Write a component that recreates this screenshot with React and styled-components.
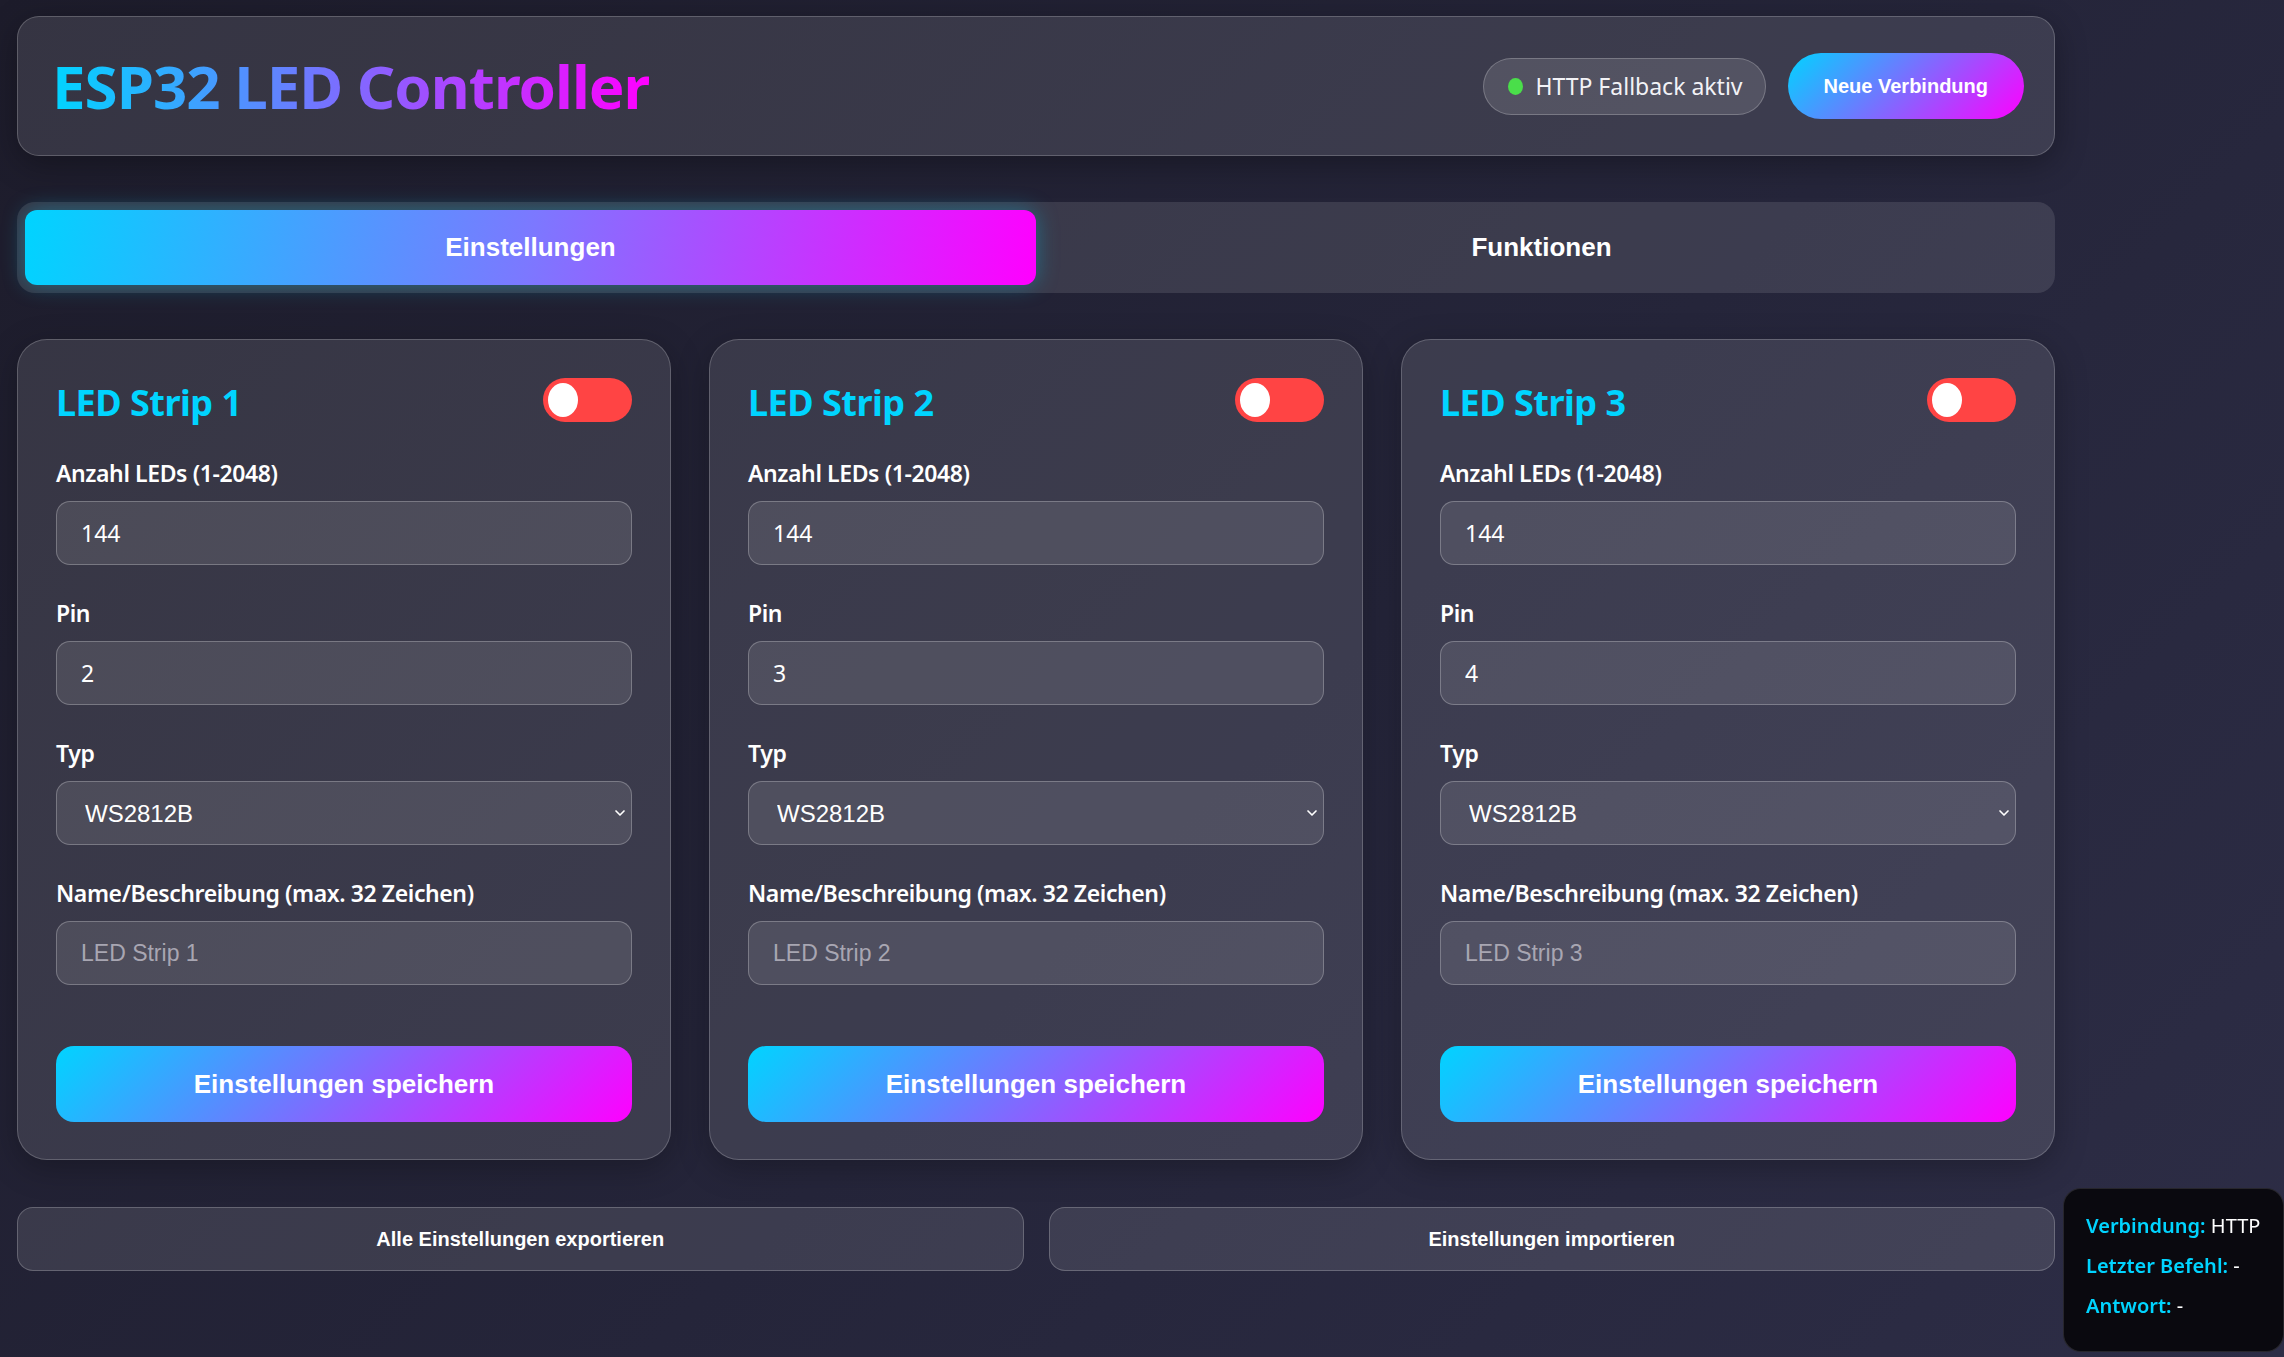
import { useState } from 'react'
import styled, { createGlobalStyle } from 'styled-components'
import { ChevronDown } from 'lucide-react'

const GlobalStyle = createGlobalStyle`
  * { box-sizing: border-box; }
  html, body {
    margin: 0;
    padding: 0;
    min-height: 100%;
  }
  body {
    min-height: 1357px;
    background: linear-gradient(135deg, #1d1c2b 0%, #25253a 55%, #2d2d46 100%);
    color: #fff;
    font-family: 'Noto Sans', 'Open Sans', sans-serif;
  }
`

const gradient = 'linear-gradient(135deg, #00d4ff 0%, #ff00ff 100%)'

const Page = styled.main`
  width: 2072px;
  padding: 16px 17px 40px 17px;
`

const Header = styled.header`
  display: flex;
  align-items: center;
  justify-content: space-between;
  height: 140px;
  padding: 0 30px 0 32px;
  background: rgba(255, 255, 255, 0.11);
  border: 1px solid rgba(255, 255, 255, 0.2);
  border-radius: 22px;
  box-shadow: 0 8px 32px rgba(0, 0, 0, 0.3);
`

const Title = styled.h1`
  margin: 0 0 0 2px;
  font-family: 'Noto Sans', sans-serif;
  font-size: 60px;
  font-weight: 700;
  letter-spacing: -1px;
  background: linear-gradient(90deg, #00d4ff 0%, #ff00ff 100%);
  -webkit-background-clip: text;
  background-clip: text;
  color: transparent;
`

const HeaderRight = styled.div`
  display: flex;
  align-items: center;
  gap: 22px;
`

const StatusPill = styled.div`
  display: flex;
  align-items: center;
  gap: 12px;
  height: 57px;
  padding: 0 22px 0 24px;
  background: rgba(255, 255, 255, 0.12);
  border: 1px solid rgba(255, 255, 255, 0.22);
  border-radius: 30px;
  font-size: 23px;
  color: #f2f2f6;
`

const Dot = styled.span`
  width: 15px;
  height: 17px;
  border-radius: 50%;
  background: ${(p) => p.color};
`

const GradientButton = styled.button`
  border: none;
  cursor: pointer;
  color: #fff;
  font-family: 'Liberation Sans', Arial, sans-serif;
  font-weight: 700;
  background: ${gradient};
  height: ${(p) => p.h}px;
  width: ${(p) => (p.block ? '100%' : 'auto')};
  padding: 0 ${(p) => (p.block ? 0 : 36)}px;
  border-radius: ${(p) => p.radius}px;
  font-size: ${(p) => p.size}px;
  margin-top: ${(p) => p.mt || 0}px;
`

const Tabs = styled.nav`
  display: grid;
  grid-template-columns: 1fr 1fr;
  margin-top: 46px;
  padding: 8px;
  background: rgba(255, 255, 255, 0.11);
  border-radius: 18px;
`

const Tab = styled.button`
  height: 75px;
  border: none;
  border-radius: 12px;
  cursor: pointer;
  font-family: 'Liberation Sans', Arial, sans-serif;
  font-size: 26px;
  font-weight: 700;
  color: #fff;
  background: ${(p) => (p.active ? 'linear-gradient(100deg, #00d4ff 0%, #7c78ff 50%, #ff00ff 100%)' : 'transparent')};
  box-shadow: ${(p) => (p.active ? '0 0 22px rgba(0, 212, 255, 0.35)' : 'none')};
`

const Cards = styled.section`
  display: grid;
  grid-template-columns: repeat(3, 1fr);
  gap: 38px;
  margin-top: 46px;
`

const Card = styled.article`
  padding: 38px 38px 37px;
  background: rgba(255, 255, 255, 0.11);
  border: 1px solid rgba(255, 255, 255, 0.2);
  border-radius: 30px;
  box-shadow: 0 8px 32px rgba(0, 0, 0, 0.25);
`

const CardHead = styled.div`
  display: flex;
  align-items: center;
  justify-content: space-between;
  height: 44px;
  margin-bottom: 35px;
`

const CardTitle = styled.h2`
  margin: 4px 0 0;
  font-size: 36px;
  font-weight: 700;
  letter-spacing: -0.5px;
  color: #00d4ff;
`

const Toggle = styled.button`
  position: relative;
  width: 89px;
  height: 44px;
  padding: 0;
  border: none;
  border-radius: 22px;
  cursor: pointer;
  background: ${(p) => (p.on ? '#44dd55' : '#ff4444')};

  &::after {
    content: '';
    position: absolute;
    top: 5px;
    left: ${(p) => (p.on ? '54px' : '5px')};
    width: 30px;
    height: 34px;
    border-radius: 50%;
    background: #fff;
  }
`

const Group = styled.div`
  margin-bottom: 32px;
`

const Label = styled.label`
  display: block;
  height: 32px;
  line-height: 32px;
  margin-bottom: 12px;
  font-size: 23px;
  font-weight: 600;
  letter-spacing: -0.4px;
  color: #fff;
`

const Field = styled.input`
  display: block;
  width: 100%;
  height: 64px;
  padding: 0 24px;
  background: rgba(255, 255, 255, 0.1);
  border: 1px solid rgba(255, 255, 255, 0.25);
  border-radius: 14px;
  color: #fff;
  font-family: ${(p) => (p.type === 'number' ? "'Noto Sans', sans-serif" : "'Liberation Sans', Arial, sans-serif")};
  font-size: 23px;
  outline: none;

  &::placeholder {
    color: #a8a6b2;
  }
  &::-webkit-inner-spin-button,
  &::-webkit-outer-spin-button {
    -webkit-appearance: none;
    margin: 0;
  }
`

const SelectWrap = styled.div`
  position: relative;

  svg {
    position: absolute;
    right: 4px;
    top: 50%;
    transform: translateY(-50%);
    pointer-events: none;
    color: #fff;
  }
`

const Select = styled.select`
  display: block;
  width: 100%;
  height: 64px;
  padding: 0 28px;
  appearance: none;
  background: rgba(255, 255, 255, 0.1);
  border: 1px solid rgba(255, 255, 255, 0.25);
  border-radius: 14px;
  color: #fff;
  font-family: 'Liberation Sans', Arial, sans-serif;
  font-size: 24px;
  outline: none;

  option {
    background: #2b2a3a;
  }
`

const Footer = styled.div`
  display: grid;
  grid-template-columns: 1fr 1fr;
  gap: 25px;
  margin-top: 47px;
`

const GhostButton = styled.button`
  height: 64px;
  background: rgba(255, 255, 255, 0.11);
  border: 1px solid rgba(255, 255, 255, 0.22);
  border-radius: 16px;
  cursor: pointer;
  color: #fff;
  font-family: 'Liberation Sans', Arial, sans-serif;
  font-size: 20px;
  font-weight: 700;
`

const DebugPanel = styled.aside`
  position: fixed;
  right: 0;
  bottom: 5px;
  width: 221px;
  padding: 17px 0 25px 22px;
  background: #0a090f;
  border: 1px solid rgba(255, 255, 255, 0.12);
  border-radius: 18px;
  font-size: 20px;
  line-height: 40px;
  color: #fff;
  z-index: 10;
`

const Key = styled.span`
  color: #00d4ff;
  font-weight: 600;
`

const strips = [
  { id: 1, leds: 144, pin: 2 },
  { id: 2, leds: 144, pin: 3 },
  { id: 3, leds: 144, pin: 4 },
]

const StripCard = ({ strip }) => {
  const [on, setOn] = useState(false)
  const [values, setValues] = useState({ leds: strip.leds, pin: strip.pin, type: 'WS2812B', name: '' })

  const handleChange = (e) => {
    setValues({ ...values, [e.target.name]: e.target.value })
  }

  return (
    <Card>
      <CardHead>
        <CardTitle>LED Strip {strip.id}</CardTitle>
        <Toggle on={on ? 1 : 0} onClick={() => setOn(!on)} aria-label='toggle' />
      </CardHead>

      <Group>
        <Label>Anzahl LEDs (1-2048)</Label>
        <Field type='number' name='leds' value={values.leds} onChange={handleChange} />
      </Group>

      <Group>
        <Label>Pin</Label>
        <Field type='number' name='pin' value={values.pin} onChange={handleChange} />
      </Group>

      <Group>
        <Label>Typ</Label>
        <SelectWrap>
          <Select name='type' value={values.type} onChange={handleChange}>
            <option value='WS2812B'>WS2812B</option>
            <option value='SK6812'>SK6812</option>
            <option value='WS2811'>WS2811</option>
          </Select>
          <ChevronDown size={16} strokeWidth={2.5} />
        </SelectWrap>
      </Group>

      <Group>
        <Label>Name/Beschreibung (max. 32 Zeichen)</Label>
        <Field
          type='text'
          name='name'
          maxLength={32}
          placeholder={`LED Strip ${strip.id}`}
          value={values.name}
          onChange={handleChange}
        />
      </Group>

      <GradientButton block h={76} radius={18} size={26} mt={29}>
        Einstellungen speichern
      </GradientButton>
    </Card>
  )
}

const App = () => {
  const [tab, setTab] = useState('settings')

  return (
    <>
      <GlobalStyle />
      <Page>
        <Header>
          <Title>ESP32 LED Controller</Title>
          <HeaderRight>
            <StatusPill>
              <Dot color='#4ade4a' />
              HTTP Fallback aktiv
            </StatusPill>
            <GradientButton h={66} radius={33} size={20}>
              Neue Verbindung
            </GradientButton>
          </HeaderRight>
        </Header>

        <Tabs>
          <Tab active={tab === 'settings' ? 1 : 0} onClick={() => setTab('settings')}>
            Einstellungen
          </Tab>
          <Tab active={tab === 'functions' ? 1 : 0} onClick={() => setTab('functions')}>
            Funktionen
          </Tab>
        </Tabs>

        <Cards>
          {strips.map((s) => (
            <StripCard key={s.id} strip={s} />
          ))}
        </Cards>

        <Footer>
          <GhostButton>Alle Einstellungen exportieren</GhostButton>
          <GhostButton>Einstellungen importieren</GhostButton>
        </Footer>
      </Page>

      <DebugPanel>
        <div><Key>Verbindung:</Key> HTTP</div>
        <div><Key>Letzter Befehl:</Key> -</div>
        <div><Key>Antwort:</Key> -</div>
      </DebugPanel>
    </>
  )
}

export default App
